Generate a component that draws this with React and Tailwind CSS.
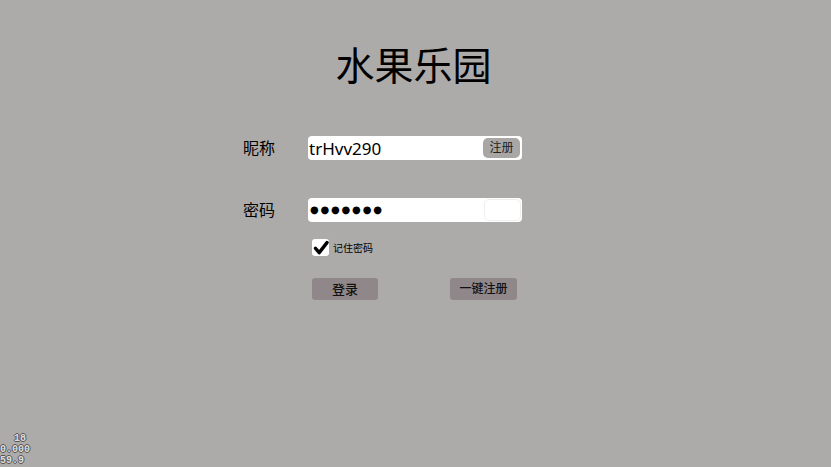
import React from "react";

const font = "[font-family:'Noto_Sans','Noto_Sans_CJK_SC',sans-serif]";

const App = () => {
  return (
    <div className={`relative h-[467px] w-full overflow-hidden bg-[#adabaa] text-black ${font}`}>
      {/* Title */}
      <div className="flex justify-center pt-[45px] pr-[4px]">
        <h1 className="text-[39px] leading-none font-normal">水果乐园</h1>
      </div>

      {/* Form */}
      <div className="flex flex-col pl-[243px] pt-[52px]">
        <div className="flex items-center">
          <span className="w-[65px] text-[16px] leading-none">昵称</span>
          <div className="flex h-[24px] w-[214px] items-center justify-between rounded-[4px] bg-white pl-[1px] pr-[2px]">
            <span className="text-[17px] leading-none">trHvv290</span>
            <button className="flex h-[20px] w-[37px] items-center justify-center rounded-[5px] bg-[#a9a7a6] text-[12px] leading-none text-[#222]">
              注册
            </button>
          </div>
        </div>

        <div className="mt-[38px] flex items-center">
          <span className="w-[65px] text-[16px] leading-none">密码</span>
          <div className="flex h-[24px] w-[214px] items-center justify-between rounded-[4px] bg-white pl-[2px] pr-[1px]">
            <span className="[font-family:'DejaVu_Sans',sans-serif] text-[10px] leading-none tracking-[1.8px]">●●●●●●●</span>
            <div className="h-[22px] w-[37px] rounded-[5px] border border-[#eeeeee] bg-white" />
          </div>
        </div>

        <div className="mt-[17px] flex items-center pl-[69px]">
          <div className="flex h-[17px] w-[17px] items-center justify-center rounded-[3px] bg-white">
            <svg viewBox="0 0 16 16" className="h-[16px] w-[16px]">
              <path d="M2.5 8.4 L6.2 12.6 L14 2.6" fill="none" stroke="black" strokeWidth="3.4" strokeLinecap="round" strokeLinejoin="round" />
            </svg>
          </div>
          <span className="ml-[4px] text-[10px] leading-none">记住密码</span>
        </div>

        <div className="mt-[22px] flex items-center pl-[69px]">
          <button className="flex h-[22px] w-[66px] items-center justify-center rounded-[3px] bg-[#8f8789] text-[13px] font-medium leading-none text-[#111]">
            登录
          </button>
          <button className="ml-[72px] flex h-[22px] w-[67px] items-center justify-center rounded-[3px] bg-[#8f8789] text-[12px] font-medium leading-none text-[#111]">
            一键注册
          </button>
        </div>
      </div>

      {/* Debug stats overlay */}
      <div className="absolute bottom-[1px] left-0 flex flex-col [font-family:'Liberation_Mono',monospace] text-[10px] font-bold leading-[11px] text-[#dddddd] [text-shadow:1px_0_0_#555,-1px_0_0_#555,0_1px_0_#555,0_-1px_0_#555]">
        <span className="pl-[14px]">18</span>
        <span>0.000</span>
        <span>59.9</span>
      </div>
    </div>
  );
};

export default App;
